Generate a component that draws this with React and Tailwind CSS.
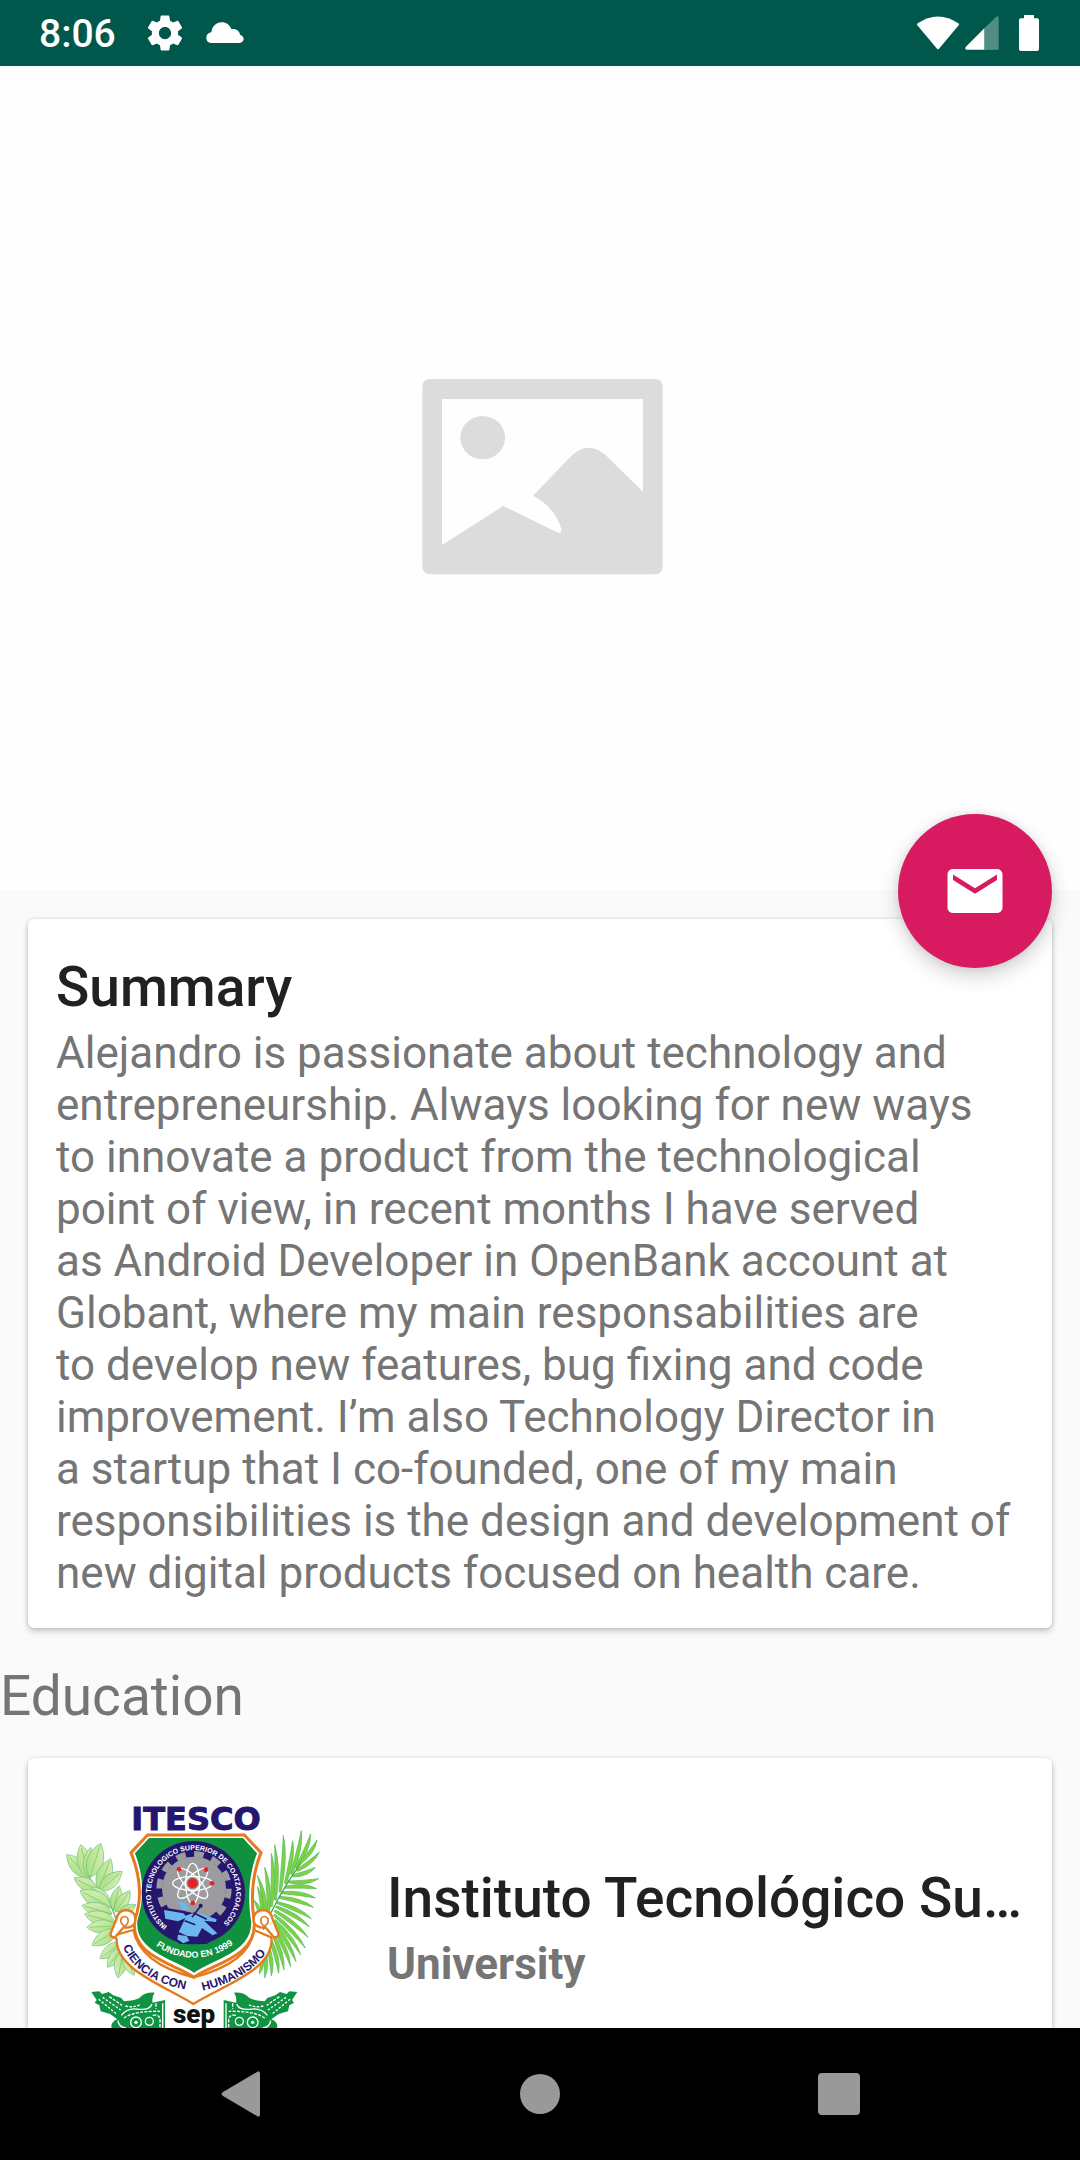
import React from "react";

const SUMMARY_LINES = [
  "Alejandro is passionate about technology and",
  "entrepreneurship. Always looking for new ways",
  "to innovate a product from the technological",
  "point of view, in recent months I have served",
  "as Android Developer in OpenBank account at",
  "Globant, where my main responsabilities are",
  "to develop new features, bug fixing and code",
  "improvement. I’m also Technology Director in",
  "a startup that I co-founded, one of my main",
  "responsibilities is the design and development of",
  "new digital products focused on health care.",
];

function StatusBar() {
  return (
    <header className="flex h-[66px] shrink-0 items-center justify-between bg-[#00574b] pr-[41px] pl-[39px] text-white">
      <div className="flex items-center">
        <span className="pt-0.5 text-[39px] leading-[44px] font-medium">8:06</span>
        <svg className="ml-7 size-[42px]" viewBox="0 0 24 24" fill="currentColor" aria-hidden="true">
          <path d="M19.43 12.98c.04-.32.07-.64.07-.98s-.03-.66-.07-.98l2.11-1.65c.19-.15.24-.42.12-.64l-2-3.46c-.12-.22-.39-.3-.61-.22l-2.49 1c-.52-.4-1.08-.73-1.69-.98l-.38-2.65C14.46 2.18 14.25 2 14 2h-4c-.25 0-.46.18-.49.42l-.38 2.65c-.61.25-1.17.59-1.69.98l-2.49-1c-.23-.09-.49 0-.61.22l-2 3.46c-.13.22-.07.49.12.64l2.11 1.65c-.04.32-.07.65-.07.98s.03.66.07.98l-2.11 1.65c-.19.15-.24.42-.12.64l2 3.46c.12.22.39.3.61.22l2.49-1c.52.4 1.08.73 1.69.98l.38 2.65c.03.24.24.42.49.42h4c.25 0 .46-.18.49-.42l.38-2.65c.61-.25 1.17-.59 1.69-.98l2.49 1c.23.09.49 0 .61-.22l2-3.46c.12-.22.07-.49-.12-.64l-2.11-1.65zM12 15.5c-1.93 0-3.5-1.57-3.5-3.5s1.57-3.5 3.5-3.5 3.5 1.57 3.5 3.5-1.57 3.5-3.5 3.5z" />
        </svg>
        <svg className="ml-5 h-[22px] w-[38px]" viewBox="0 0 114 66" fill="currentColor" aria-hidden="true">
          <path d="M18 63C8 63 1 57 1 47C1 38 7 32 16 31C19 12 31 1 47 1C61 1 71 9 76 21C91 19 101 27 102 38C109 40 113 45 113 51C113 58 107 63 99 63Z" />
        </svg>
      </div>
      <div className="flex items-center">
        <svg className="h-[34px] w-[42px]" viewBox="0 0 126 102" fill="currentColor" aria-hidden="true">
          <path d="M60 98L1 28Q-1 25 2 22Q63 -19 124 22Q127 25 125 28L66 98Q63 101 60 98Z" />
        </svg>
        <svg className="ml-1.5 h-[34px] w-[34px]" viewBox="0 0 102 102" fill="currentColor" aria-hidden="true">
          <path opacity=".32" d="M58 102V37L94 2Q101 -1 101 5V98Q101 101 98 101Z" />
          <path d="M58 101V37L2 93Q-2 101 5 101Z" />
        </svg>
        <svg className="ml-5 h-9 w-5" viewBox="0 0 60 108" fill="currentColor" aria-hidden="true">
          <path d="M15 10V0H45V10H54Q60 10 60 16V102Q60 108 54 108H6Q0 108 0 102V16Q0 10 6 10Z" />
        </svg>
      </div>
    </header>
  );
}

function Placeholder() {
  return (
    <svg className="h-[236px] w-[280px]" viewBox="0 0 840 708" role="img" aria-label="Profile picture">
      <path
        fill="#dcdcdc"
        fillRule="evenodd"
        d="M92 57H764Q788 57 788 82V618Q788 643 764 643H92Q67 643 67 618V82Q67 57 92 57ZM126 117V555L310 438L474 518Q486 522 484 507C474 470 446 432 399 407L500 302Q562 228 626 294L729 395V117Z"
      />
      <ellipse cx="248" cy="233" rx="67" ry="65" fill="#dcdcdc" />
    </svg>
  );
}

// Each leaf is given by its base point and its tip.
const LEAVES = [
  [116, 262, 50, 194], [116, 262, 92, 164], [118, 262, 122, 172], [120, 262, 152, 160],
  [145, 302, 72, 264], [146, 298, 182, 206], [148, 302, 216, 244], [180, 350, 128, 290],
  [184, 352, 90, 302], [186, 372, 96, 346], [190, 360, 208, 288], [196, 366, 240, 302],
  [204, 374, 258, 344], [196, 398, 104, 372], [198, 408, 110, 412], [200, 420, 126, 466],
  [214, 458, 150, 506], [216, 474, 172, 532], [220, 482, 204, 564], [222, 486, 252, 556],
];

function Leaf({ leaf }) {
  const [x1, y1, x2, y2] = leaf;
  const length = Math.hypot(x2 - x1, y2 - y1);
  const angle = (Math.atan2(y2 - y1, x2 - x1) * 180) / Math.PI;
  const w = length * 0.3;
  return (
    <g transform={`translate(${x1} ${y1}) rotate(${angle})`}>
      <path
        d={`M0 0C${length * 0.25} ${-w} ${length * 0.65} ${-w} ${length} 0C${length * 0.65} ${w} ${length * 0.25} ${w} 0 0Z`}
        fill="url(#leafFill)"
        stroke="#6fc08a"
        strokeWidth="2"
      />
      <path d={`M0 0H${length * 0.9}`} stroke="#7cc462" strokeWidth="2" fill="none" />
    </g>
  );
}

// Each frond is given by its start on the stem and its tip.
const FRONDS = [
  [636, 400, 612, 330], [640, 392, 622, 290], [650, 380, 622, 256], [656, 366, 644, 232],
  [664, 350, 664, 190], [676, 330, 674, 164], [690, 306, 700, 136], [706, 280, 728, 152],
  [724, 252, 754, 122], [738, 234, 782, 132], [748, 222, 801, 150], [740, 242, 808, 186],
  [728, 258, 796, 232], [716, 276, 806, 266], [706, 292, 800, 296], [696, 308, 796, 324],
  [688, 322, 790, 352], [682, 338, 784, 386], [678, 350, 778, 410], [674, 362, 774, 442],
  [672, 374, 766, 474], [674, 390, 752, 494], [674, 402, 738, 515], [672, 416, 722, 530],
  [668, 430, 702, 540], [660, 445, 686, 550], [652, 460, 664, 558], [642, 475, 644, 564],
  [634, 490, 628, 552],
];

function Frond({ frond }) {
  const [x1, y1, x2, y2] = frond;
  const length = Math.hypot(x2 - x1, y2 - y1);
  const angle = (Math.atan2(y2 - y1, x2 - x1) * 180) / Math.PI;
  const bend = y2 < y1 ? 10 : -10;
  return (
    <g transform={`translate(${x1} ${y1}) rotate(${angle})`}>
      <path
        d={`M0 -3Q${length * 0.6} ${bend - 9} ${length} 0Q${length * 0.6} ${bend + 9} 0 3Z`}
        fill="#7fd33f"
        stroke="#4fba62"
        strokeWidth="2"
      />
    </g>
  );
}

function RibbonCurl() {
  return (
    <g fill="#fff" stroke="#e57a1e" strokeWidth="7" strokeLinejoin="round">
      <path d="M612 398Q606 364 638 360Q662 360 668 388L685 430Q687 442 672 442L646 412Q622 416 612 398Z" />
      <path d="M646 412Q628 400 634 384Q644 374 654 386Q658 398 644 408" strokeWidth="5" />
    </g>
  );
}

function Headdress() {
  return (
    <g>
      <path
        fill="#0f9443"
        d="M124 606L148 604L156 612L176 606L190 616L214 624L222 634Q252 632 268 624Q284 606 314 608Q304 622 308 638L345 630V730H192Q172 700 202 688L180 672L152 664L148 646L134 638L140 630Z"
      />
      <g fill="none" stroke="#fff" strokeWidth="4">
        <path d="M146 628L200 672M158 622L212 660" strokeDasharray="7 5" />
        <path d="M178 620L216 646" strokeDasharray="9 4" />
        <path d="M214 676Q232 652 268 658Q300 660 306 642" />
        <path d="M222 684Q254 662 330 664" strokeDasharray="9 4" />
        <path d="M226 648Q248 654 270 644" strokeDasharray="8 4" />
        <path d="M318 640V656M308 676Q330 672 330 690V715" strokeDasharray="10 4" />
        <circle cx="258" cy="697" r="16" />
        <circle cx="298" cy="694" r="12" />
        <path d="M204 692Q206 712 228 714M338 640V715" />
      </g>
      <circle cx="258" cy="697" r="5" fill="#fff" />
    </g>
  );
}

function SchoolLogo() {
  return (
    <svg className="size-[275px] shrink-0" viewBox="18 -12 825 825" role="img" aria-label="ITESCO">
      <defs>
        <linearGradient id="leafFill" x1="0" x2="1" y1="0" y2="1">
          <stop offset="0" stopColor="#a3dc78" />
          <stop offset="1" stopColor="#dcf2c0" />
        </linearGradient>
        <path id="ringLine" d="M352 409A128 128 0 1 1 510 408" />
        <path id="foundedLine" d="M318 467A195 195 0 0 0 550 462" />
        <path id="mottoLeft" d="M219 470Q262 576 426 602" />
        <path id="mottoRight" d="M458 602Q610 566 664 462" />
      </defs>

      <path
        d="M118 262Q140 300 184 352Q204 390 222 486M148 300Q150 290 150 290"
        fill="none"
        stroke="#6cbc52"
        strokeWidth="4"
      />
      {LEAVES.map((leaf) => (
        <Leaf key={leaf.join()} leaf={leaf} />
      ))}
      {FRONDS.map((frond) => (
        <Frond key={frond.join()} frond={frond} />
      ))}
      <path d="M640 420Q680 320 752 220" fill="none" stroke="#43aa4a" strokeWidth="4" />

      <path
        d="M186 438L200 446C196 540 350 590 430 642C510 590 676 540 664 442L612 420Q598 520 430 562Q270 520 250 420Z"
        fill="#fff"
        stroke="#e57a1e"
        strokeWidth="7"
        strokeLinejoin="round"
      />
      <path
        d="M293 135H583L633 188C608 250 602 320 612 390C626 500 490 520 432 562C374 520 240 500 254 390C280 320 268 250 243 188Z"
        fill="#fff"
        stroke="#e57a1e"
        strokeWidth="9"
      />
      <path
        d="M297 144H579L621 190C598 250 592 320 603 392C612 485 486 510 432 548C378 510 252 485 262 392C286 320 278 250 255 190Z"
        fill="#0f9140"
      />
      <RibbonCurl />
      <g transform="matrix(-1 0 0 1 867 0)">
        <RibbonCurl />
      </g>
      <circle cx="430" cy="308" r="155" fill="#25166f" />
      <circle cx="432" cy="296" r="96" fill="#9b9ba0" />
      <circle cx="432" cy="296" r="104" fill="none" stroke="#9b9ba0" strokeWidth="18" strokeDasharray="29 25.4" />
      <path d="M326 350L400 362L490 384L500 398L530 420L470 462H390L330 420Z" fill="#25166f" />
      <g fill="none" stroke="#fff" strokeWidth="4">
        <ellipse cx="428" cy="280" rx="60" ry="21" />
        <ellipse cx="428" cy="280" rx="60" ry="21" transform="rotate(45 428 280)" />
        <ellipse cx="428" cy="280" rx="60" ry="21" transform="rotate(90 428 280)" />
        <ellipse cx="428" cy="280" rx="60" ry="21" transform="rotate(135 428 280)" />
      </g>
      <g fill="#e32222">
        <circle cx="428" cy="280" r="15" />
        <circle cx="387" cy="238" r="7" />
        <circle cx="468" cy="239" r="7" />
        <circle cx="486" cy="280" r="7" />
        <circle cx="428" cy="339" r="7" />
      </g>
      <g fill="#6cb8ee">
        <path d="M342 360L400 370L412 382L384 394L346 386Z" />
        <path d="M382 334L404 338L422 358L398 360Z" />
        <path d="M410 376L440 366L500 388L498 396L462 392L502 430L488 436L456 414L442 440L412 438L386 426Z" />
        <path d="M384 434L410 438L418 452L400 460L382 448Z" />
      </g>
      <path d="M426 382L452 348M404 392L436 404M430 368L470 388" stroke="#25166f" strokeWidth="5" />
      <circle cx="452" cy="347" r="6" fill="#25166f" />

      <g fontFamily="'Liberation Sans', Arial, sans-serif" fontWeight="700">
        <text fontSize="21" fill="#fff">
          <textPath href="#ringLine">INSTITUTO TECNOLOGICO SUPERIOR DE COATZACOALCOS</textPath>
        </text>
        <text fontSize="27" fill="#fff">
          <textPath href="#foundedLine">FUNDADO EN 1999</textPath>
        </text>
        <g fontSize="36" fill="#25166f">
          <text>
            <textPath href="#mottoLeft">CIENCIA CON</textPath>
          </text>
          <text>
            <textPath href="#mottoRight">HUMANISMO</textPath>
          </text>
        </g>
      </g>
      <text
        x="438"
        y="119"
        textAnchor="middle"
        fontFamily="'DejaVu Sans', sans-serif"
        fontWeight="700"
        fontSize="96"
        fill="#25166f"
        stroke="#25166f"
        strokeWidth="3"
      >
        ITESCO
      </text>

      <Headdress />
      <g transform="matrix(-1 0 0 1 866 0)">
        <Headdress />
      </g>
      <text
        x="432"
        y="698"
        textAnchor="middle"
        fontFamily="Roboto, sans-serif"
        fontWeight="900"
        fontSize="78"
        fill="#111"
      >
        sep
      </text>
    </svg>
  );
}

function Card({ className, children }) {
  return (
    <section
      className={`mx-7 rounded-[6px] bg-white shadow-[0_3px_6px_rgba(0,0,0,0.22),0_0_3px_rgba(0,0,0,0.12)] ${className}`}
    >
      {children}
    </section>
  );
}

function NavigationBar() {
  return (
    <nav className="flex h-[132px] shrink-0 items-center justify-around bg-black px-[92px] text-[#999]">
      <button type="button" aria-label="Back" className="flex size-24 items-center justify-center">
        <svg className="h-[46px] w-10" viewBox="0 0 40 46" fill="currentColor" aria-hidden="true">
          <path d="M36 1Q39 -1 39 3V43Q39 47 36 45L2 25Q-1 23 2 21Z" />
        </svg>
      </button>
      <button type="button" aria-label="Home" className="flex size-24 items-center justify-center">
        <span className="size-10 rounded-full bg-current" />
      </button>
      <button type="button" aria-label="Overview" className="flex size-24 items-center justify-center">
        <span className="size-[42px] rounded-[4px] bg-current" />
      </button>
    </nav>
  );
}

export default function App() {
  return (
    <div className="flex h-screen flex-col overflow-hidden bg-[#fafafa] font-[Roboto,sans-serif] text-[#757575]">
      <StatusBar />
      <main className="min-h-0 flex-1 overflow-hidden">
        <div className="relative flex h-[824px] items-center justify-center bg-[#fefefe]">
          <Placeholder />
          <button
            type="button"
            aria-label="Send email"
            className="absolute right-7 -bottom-[78px] flex size-[154px] items-center justify-center rounded-full bg-[#d81b60] text-white shadow-[0_8px_20px_rgba(0,0,0,0.18),0_0_8px_rgba(0,0,0,0.08)]"
          >
            <svg className="size-[66px]" viewBox="0 0 24 24" fill="currentColor" aria-hidden="true">
              <path d="M20 4H4c-1.1 0-1.99.9-1.99 2L2 18c0 1.1.9 2 2 2h16c1.1 0 2-.9 2-2V6c0-1.1-.9-2-2-2zm0 4l-8 5-8-5V6l8 5 8-5v2z" />
            </svg>
          </button>
        </div>

        <Card className="mt-[29px] px-7 pt-9 pb-[29px]">
          <h1 className="mb-2 text-[55px] leading-[64px] font-medium text-[#212121]">Summary</h1>
          <p className="text-[44px] leading-[52px] whitespace-pre-line">{SUMMARY_LINES.join("\n")}</p>
        </Card>

        <h2 className="mt-9 text-[55px] leading-[64px]">Education</h2>

        <Card className="mt-[30px] flex items-center p-7">
          <SchoolLogo />
          <div className="ml-14 min-w-0 flex-1 pt-2">
            <h3 className="mb-2 truncate text-[55px] leading-[64px] font-medium text-[#212121]">
              Instituto Tecnológico Superior de Coatzacoalcos
            </h3>
            <p className="text-[44px] leading-[52px] font-bold">University</p>
          </div>
        </Card>
      </main>
      <NavigationBar />
    </div>
  );
}
